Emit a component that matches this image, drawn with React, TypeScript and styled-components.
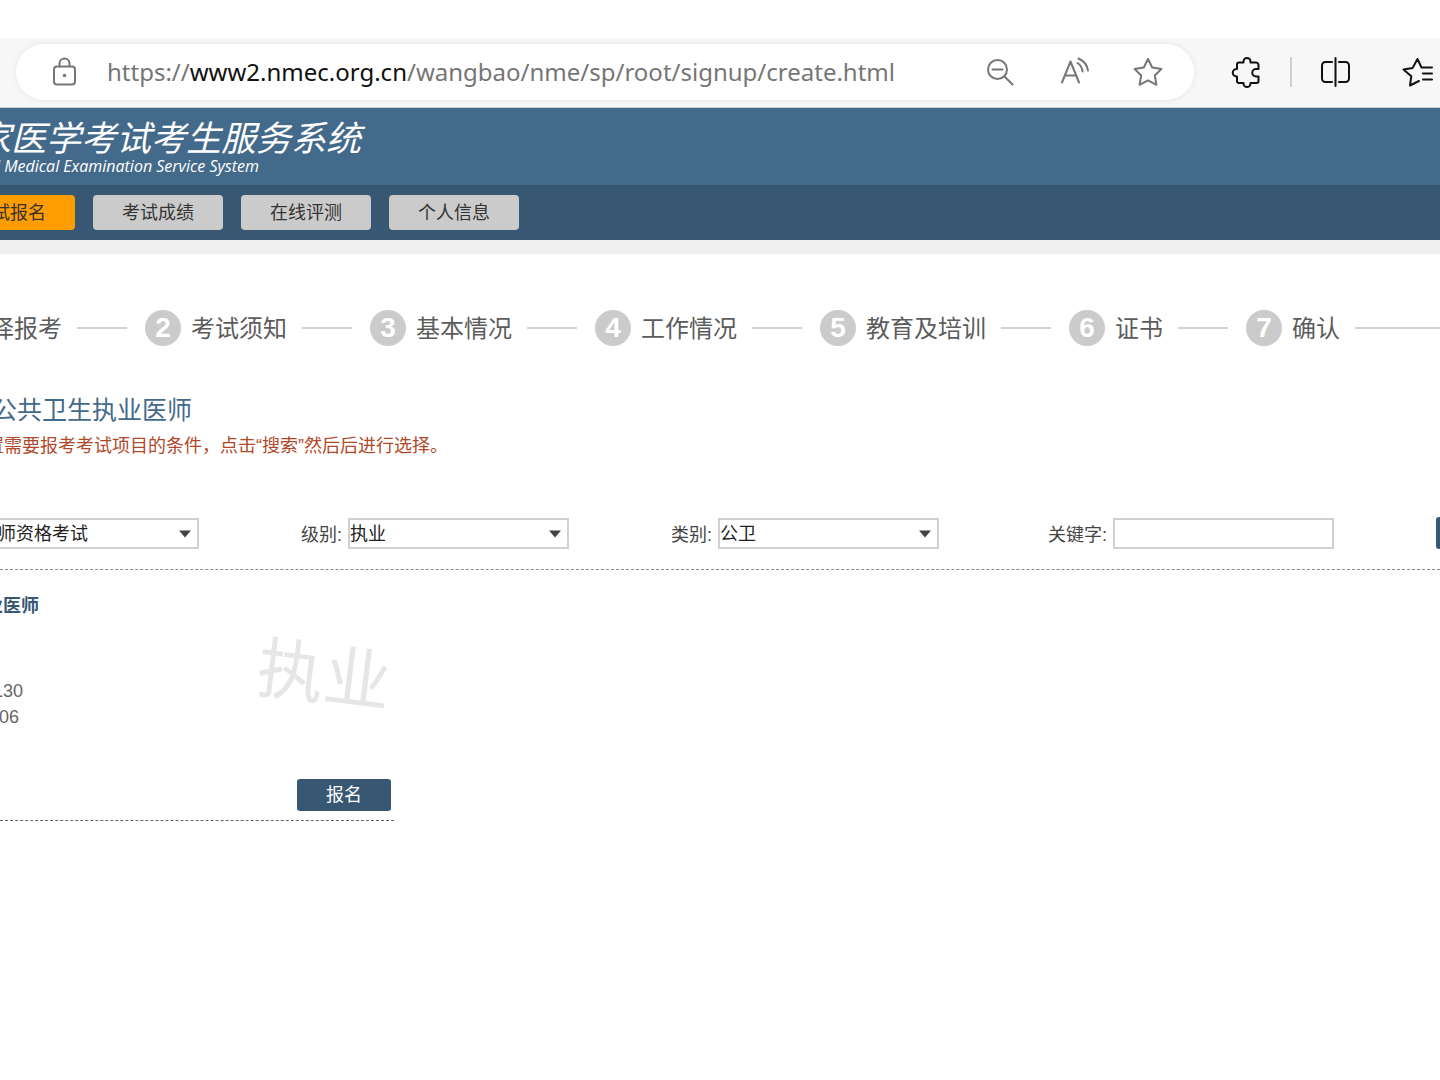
import React from "react";
import styled, { createGlobalStyle } from "styled-components";

const cjk = `"Liberation Sans", "Noto Sans CJK SC", sans-serif`;

const Global = createGlobalStyle`
  *, *::before, *::after { box-sizing: border-box; }
  body { margin: 0; background: #fff; font-family: ${cjk}; color: #444; overflow-x: hidden; }
  button, select, input { font-family: inherit; margin: 0; }
  h1, h2, h3, p, ol { margin: 0; padding: 0; font-weight: 400; }
`;

const Browser = styled.div`
  display: flex;
  align-items: center;
  margin-top: 38px;
  height: 70px;
  padding: 0 7px 2px 16px;
  background: #f7f7f7;
  border-bottom: 1px solid #c9d0d6;
`;

const Address = styled.div`
  flex: 1;
  display: flex;
  align-items: center;
  gap: 42px;
  height: 56px;
  padding: 0 30px 0 32px;
  border-radius: 28px;
  background: #fff;
  box-shadow: 0 0 6px rgba(0, 0, 0, 0.08);
`;

const Location = styled.div`
  flex: 1;
  display: flex;
  align-items: center;
  gap: 27px;
  color: #767676;
`;

const Url = styled.span`
  font: 24px/34px "Noto Sans", "Open Sans", sans-serif;
  white-space: nowrap;
`;

const Host = styled.span`
  color: #111;
`;

const IconButton = styled.button<{ $dark?: boolean; $before?: number }>`
  display: block;
  flex: none;
  width: 32px;
  height: 32px;
  margin-left: ${(p) => p.$before ?? 0}px;
  padding: 0;
  border: 0;
  background: none;
  color: ${(p) => (p.$dark ? "#111" : "#767676")};
`;

const Divider = styled.span`
  width: 2px;
  height: 30px;
  margin-left: 28px;
  background: #d0d0d0;
`;

const Icon = styled.svg`
  display: block;
  width: 32px;
  height: 32px;
  fill: none;
  stroke: currentColor;
  stroke-width: 2;
  stroke-linecap: round;
  stroke-linejoin: round;
`;

/* The page is scrolled sideways, so its left part lies outside the window. */
const Sheet = styled.div`
  margin-left: -40px;
  white-space: nowrap;
`;

const Banner = styled.header`
  height: 77px;
  padding: 9px 0 0 16px;
  background: #446a8b;
  color: #fff;
  font-style: italic;
`;

const SiteName = styled.h1`
  font-size: 35px;
  line-height: 44px;
`;

const SiteNameEn = styled.p`
  padding-left: 20px;
  font: italic 500 16px/10px "Open Sans", "Noto Sans", sans-serif;
`;

const Nav = styled.nav`
  display: flex;
  align-items: center;
  gap: 18px;
  height: 55px;
  padding-left: 3px;
  background: #375772;
`;

const NavButton = styled.button<{ $active?: boolean }>`
  height: 35px;
  padding: 1px 29px 0;
  border: 0;
  border-radius: 4px;
  background: ${(p) => (p.$active ? "#ff9c00" : "#cbcbcb")};
  color: #333;
  font-size: 18px;
  line-height: 34px;
`;

const Strip = styled.div`
  height: 14px;
  background: #f0f0f0;
`;

const Steps = styled.ol`
  display: flex;
  align-items: center;
  margin-top: 55px;
  padding-left: 30px;
  list-style: none;
`;

const Step = styled.li<{ $last?: boolean }>`
  display: flex;
  align-items: center;
  flex: ${(p) => (p.$last ? "1" : "none")};
  color: #5c5c5c;
  font-size: 24px;
  line-height: 34px;

  &::after {
    content: "";
    flex: ${(p) => (p.$last ? "1" : "none")};
    width: 50px;
    height: 2px;
    margin: 0 ${(p) => (p.$last ? 0 : 18)}px 0 15px;
    background: #d3d3d3;
  }
`;

const StepName = styled.span`
  padding-top: 3px;
`;

const StepNumber = styled.span`
  width: 36px;
  height: 36px;
  margin-right: 10px;
  border-radius: 50%;
  background: #cbcbcb;
  color: #fff;
  font-size: 28px;
  font-weight: 700;
  line-height: 36px;
  text-align: center;
`;

const Heading = styled.h2`
  margin-top: 46px;
  padding-left: 32px;
  color: #446a8b;
  font-size: 25px;
  line-height: 36px;
`;

const Hint = styled.p`
  padding-left: 26px;
  color: #b0492a;
  font-size: 18px;
  line-height: 36px;
`;

const Filters = styled.form`
  display: flex;
  align-items: center;
  gap: 102px;
  margin-top: 53px;
  padding: 0 0 20px 18px;
  border-bottom: 1px dashed #888;
`;

const Field = styled.div`
  display: flex;
  align-items: center;
  gap: 6px;
  flex: none;
`;

const Label = styled.label<{ $wide?: boolean }>`
  min-width: ${(p) => (p.$wide ? 66 : 41)}px;
  padding-top: 3px;
  font-size: 18px;
  line-height: 28px;
  text-align: right;
`;

const SelectBox = styled.span`
  display: grid;
  align-items: center;
  width: 221px;
  height: 31px;
  border: 2px solid #d0d0d0;

  & > * {
    grid-area: 1 / 1;
  }
`;

const Select = styled.select`
  appearance: none;
  width: 100%;
  height: 27px;
  padding: 2px 0 0;
  border: 0;
  background: none;
  color: #222;
  font-size: 18px;
  line-height: 25px;
`;

const Arrow = styled.svg`
  justify-self: end;
  width: 12px;
  height: 8px;
  margin: 2px 6px 0 0;
  fill: #444;
  pointer-events: none;
`;

const TextInput = styled.input`
  width: 221px;
  height: 31px;
  padding: 0 4px;
  border: 2px solid #d0d0d0;
  font-size: 18px;
`;

const Primary = styled.button`
  flex: none;
  width: 94px;
  height: 32px;
  padding: 0;
  border: 0;
  border-radius: 3px;
  background: #375772;
  color: #fff;
  font-size: 18px;
  line-height: 30px;
`;

const Card = styled.article`
  width: 434px;
  padding: 22px 3px 9px 25px;
  border-bottom: 1px dashed #666;
`;

const CardTitle = styled.h3`
  color: #375772;
  font-size: 18px;
  font-weight: 700;
  line-height: 28px;
`;

const CardBody = styled.div`
  display: flex;
  justify-content: space-between;
  height: 159px;
`;

const Codes = styled.div`
  padding: 58px 0 0 8px;
  color: #666;
  font-size: 18px;
  line-height: 26px;
`;

const Code = styled.p<{ $indent?: boolean }>`
  padding-left: ${(p) => (p.$indent ? 6 : 0)}px;
`;

const Level = styled.span`
  margin-top: 8px;
  height: 96px;
  color: #e6e6e6;
  font-size: 67px;
  line-height: 96px;
  transform: rotate(7deg);
`;

const CardActions = styled.div`
  display: flex;
  justify-content: flex-end;
`;

const steps = ["考试须知", "基本情况", "工作情况", "教育及培训", "证书", "确认"];

function Choice({ id, label, value }: { id: string; label?: string; value: string }) {
  return (
    <Field>
      {label && <Label htmlFor={id}>{label}</Label>}
      <SelectBox>
        <Select id={id} aria-label={label ? undefined : "考试"}>
          <option>{value}</option>
        </Select>
        <Arrow viewBox="0 0 12 8">
          <path d="M0 0.500h12L6 7.500z" />
        </Arrow>
      </SelectBox>
    </Field>
  );
}

export default function App() {
  return (
    <>
      <Global />
      <Browser>
        <Address>
          <Location>
            <Icon viewBox="0 0 32 32">
              <rect x="6" y="10.500" width="21" height="18" rx="3" />
              <path d="M11.500 10.500V7.500a5 5 0 0 1 10 0v3" />
              <circle cx="16.500" cy="19.500" r="0.800" fill="currentColor" />
            </Icon>
            <Url>
              https://<Host>www2.nmec.org.cn</Host>/wangbao/nme/sp/root/signup/create.html
            </Url>
          </Location>
          <IconButton aria-label="缩小">
            <Icon viewBox="0 0 32 32">
              <circle cx="13.500" cy="13.500" r="9.500" />
              <path d="M8.500 13.500h10M20.500 20.500l8 8" />
            </Icon>
          </IconButton>
          <IconButton aria-label="朗读">
            <Icon viewBox="0 0 32 32">
              <path d="M4 26.500 12.500 5.500 21 26.500M7 19.500h11M19.500 7q4.500 3 5 8.500M20.500 2.500q8.500 4 9.500 12" />
            </Icon>
          </IconButton>
          <IconButton aria-label="收藏">
            <Icon viewBox="0 0 32 32">
              <path d="M16 3l4.200 8.500 9.300 1.400-6.700 6.600 1.600 9.300L16 24.400l-8.400 4.400 1.600-9.300L2.500 12.900l9.300-1.400z" />
            </Icon>
          </IconButton>
        </Address>
        <IconButton $dark $before={36} aria-label="扩展">
          <Icon viewBox="0 0 32 32">
            <path d="M9 6.500h4.500v-1a3.500 3.500 0 0 1 7 0v1H26a2.500 2.500 0 0 1 2.500 2.500v4H26a3.500 3.500 0 0 0 0 7.500h2.500V25a2 2 0 0 1-2 2h-6v0.500a3.500 3.500 0 0 1-7 0V27H9a2 2 0 0 1-2-2v-4.500H6.500a3.500 3.500 0 0 1 0-7.500H7V8.500a2 2 0 0 1 2-2z" />
          </Icon>
        </IconButton>
        <Divider />
        <IconButton $dark $before={27} aria-label="分屏">
          <Icon viewBox="0 0 32 32">
            <path d="M13 6H6.500A3.500 3.500 0 0 0 3 9.500v13A3.500 3.500 0 0 0 6.500 26H13M20 6h6.500A3.500 3.500 0 0 1 30 9.500v13a3.500 3.500 0 0 1-3.500 3.500H20M16.500 2v28" />
          </Icon>
        </IconButton>
        <IconButton $dark $before={50} aria-label="收藏夹">
          <Icon viewBox="0 0 32 32">
            <path d="M18 25 9 29.500l1.300-9.200L2.500 13.500l9.200-1.600L16.500 3l4 8.500H31M22 17.500h9M22 23.500h9" />
          </Icon>
        </IconButton>
      </Browser>
      <Sheet>
        <Banner>
          <SiteName>家医学考试考生服务系统</SiteName>
          <SiteNameEn>l Medical Examination Service System</SiteNameEn>
        </Banner>
        <Nav>
          <NavButton $active>试报名</NavButton>
          <NavButton>考试成绩</NavButton>
          <NavButton>在线评测</NavButton>
          <NavButton>个人信息</NavButton>
        </Nav>
        <Strip />
        <main>
          <Steps>
            <Step>
              <StepName>择报考</StepName>
            </Step>
            {steps.map((name, i) => (
              <Step key={name} $last={i === steps.length - 1}>
                <StepNumber>{i + 2}</StepNumber>
                <StepName>{name}</StepName>
              </Step>
            ))}
          </Steps>
          <Heading>公共卫生执业医师</Heading>
          <Hint>置需要报考考试项目的条件，点击“搜索”然后后进行选择。</Hint>
          <Filters onSubmit={(e) => e.preventDefault()}>
            <Choice id="exam" value="医师资格考试" />
            <Choice id="level" label="级别:" value="执业" />
            <Choice id="category" label="类别:" value="公卫" />
            <Field>
              <Label $wide htmlFor="keyword">关键字:</Label>
              <TextInput id="keyword" type="text" />
            </Field>
            <Primary type="submit" aria-label="搜索" />
          </Filters>
          <Card>
            <CardTitle>业医师</CardTitle>
            <CardBody>
              <Codes>
                <Code>130</Code>
                <Code $indent>06</Code>
              </Codes>
              <Level>执业</Level>
            </CardBody>
            <CardActions>
              <Primary type="button">报名</Primary>
            </CardActions>
          </Card>
        </main>
      </Sheet>
    </>
  );
}
